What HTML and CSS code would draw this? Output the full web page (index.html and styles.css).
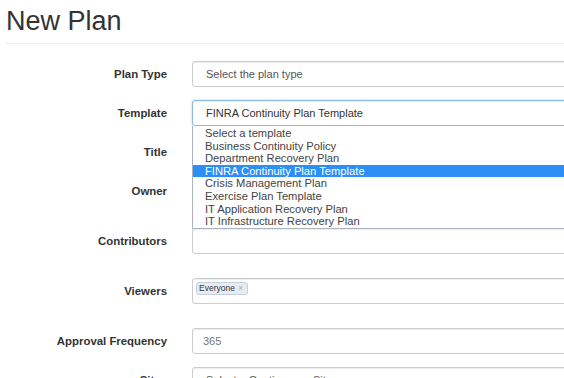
FILE: index.html
```html
<!DOCTYPE html>
<html>
<head>
<meta charset="utf-8">
<title>New Plan</title>
<link rel="stylesheet" href="styles.css">
</head>
<body>
<div class="page">
  <h1 class="title">New Plan</h1>
  <form class="form">
    <div class="row">
      <label class="label">Plan Type</label>
      <div class="field"><div class="control placeholder">Select the plan type</div></div>
    </div>
    <div class="row">
      <label class="label">Template</label>
      <div class="field">
        <div class="control focus">FINRA Continuity Plan Template</div>
        <ul class="listbox">
          <li>Select a template</li>
          <li>Business Continuity Policy</li>
          <li>Department Recovery Plan</li>
          <li class="selected">FINRA Continuity Plan Template</li>
          <li>Crisis Management Plan</li>
          <li>Exercise Plan Template</li>
          <li>IT Application Recovery Plan</li>
          <li>IT Infrastructure Recovery Plan</li>
        </ul>
      </div>
    </div>
    <div class="row">
      <label class="label">Title</label>
      <div class="field"><div class="control"></div></div>
    </div>
    <div class="row row-help">
      <label class="label">Owner</label>
      <div class="field"><div class="control"></div></div>
    </div>
    <div class="row row-help">
      <label class="label">Contributors</label>
      <div class="field"><div class="control"></div></div>
    </div>
    <div class="row row-help">
      <label class="label">Viewers</label>
      <div class="field"><div class="control tags"><span class="tag">Everyone <span class="tag-x">×</span></span></div></div>
    </div>
    <div class="row">
      <label class="label">Approval Frequency</label>
      <div class="field"><div class="control number">365</div></div>
    </div>
    <div class="row">
      <label class="label">Sites</label>
      <div class="field"><div class="control placeholder">Select a Contingency Site</div></div>
    </div>
  </form>
</div>
</body>
</html>
```

FILE: styles.css
```css
html, body {
  margin: 0;
  padding: 0;
  background: #fff;
  overflow: hidden;
}

body {
  font-family: "Liberation Sans", Arial, sans-serif;
  color: #333;
}

.page {
  padding: 6px 0 0 5px;
  overflow: hidden;
}

.title {
  margin: 0;
  font-size: 27px;
  line-height: 31px;
  font-weight: normal;
  color: #333;
  padding: 0 0 6px 1px;
  border-bottom: 1px solid #eee;
}

.form {
  margin-top: 17px;
}

.row {
  display: flex;
  align-items: center;
  margin-bottom: 13px;
}

.row-help {
  margin-bottom: 24px;
}

.label {
  width: 162px;
  flex: none;
  text-align: right;
  font-size: 11.4px;
  font-weight: bold;
  color: #333;
}

.field {
  position: relative;
  flex: 1;
  margin-left: 25px;
  margin-right: -40px;
}

.control {
  box-sizing: border-box;
  height: 26px;
  line-height: 25px;
  padding: 0 13px;
  border: 1px solid #ccc;
  border-radius: 3px;
  box-shadow: inset 0 1px 1px rgba(0, 0, 0, 0.075);
  font-size: 11px;
  color: #444;
  background: #fff;
}

.placeholder {
  color: #555;
}

.focus {
  border-color: #8fb8dc;
  box-shadow: inset 0 1px 1px rgba(0, 0, 0, 0.075), 0 0 3px rgba(102, 175, 233, 0.5);
  color: #333;
}

.number {
  padding-left: 10px;
  color: #777;
}

.tags {
  display: flex;
  align-items: flex-start;
  padding: 3px 3px 0;
}

.tag {
  display: inline-block;
  box-sizing: border-box;
  height: 13px;
  line-height: 11px;
  padding: 0 4px 0 2px;
  font-size: 8.5px;
  color: #333;
  background: #e6ecf3;
  border: 1px solid #c6d0dc;
  border-radius: 3px;
}

.tag-x {
  color: #aaa;
  margin-left: 1px;
}

.listbox {
  position: absolute;
  top: 26px;
  left: 0;
  right: 0;
  z-index: 5;
  margin: 0;
  padding: 1px 0 0;
  list-style: none;
  background: #fff;
  border: 1px solid #a9b4c0;
  border-top: none;
}

.listbox li {
  height: 12.6px;
  line-height: 12.6px;
  padding-left: 12px;
  font-size: 11.2px;
  color: #444;
  white-space: nowrap;
}

.listbox li.selected {
  background: #2b8ff6;
  color: #fff;
}
```
